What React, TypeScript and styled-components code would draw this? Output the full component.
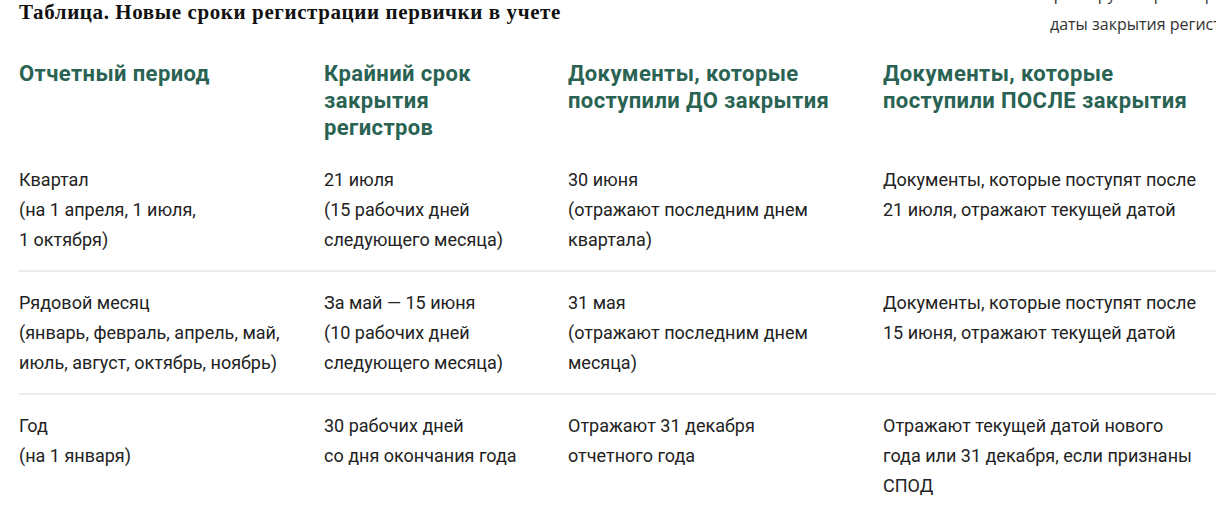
import React from "react";
import styled, { createGlobalStyle } from "styled-components";

const Global = createGlobalStyle`
  html, body { margin: 0; padding: 0; background: #fff; }
  body { overflow: hidden; width: 1216px; height: 513px; }
`;

const Page = styled.div`
  padding: 0 0 0 19px;
  width: 1216px;
  box-sizing: border-box;
  overflow: hidden;
`;

const TopBar = styled.div`
  display: flex;
  justify-content: space-between;
  align-items: flex-start;
  height: 36px;
`;

const Title = styled.h3`
  margin: 0;
  font-family: "Liberation Serif", "DejaVu Serif", serif;
  font-weight: 700;
  font-size: 21px;
  letter-spacing: 0.6px;
  line-height: 24px;
  color: #111;
  white-space: nowrap;
`;

const Aside = styled.div`
  width: 166px;
  overflow: hidden;
  white-space: nowrap;
  margin-top: -21px;
  font-family: "Open Sans", sans-serif;
  font-size: 16px;
  line-height: 30px;
  color: #333;
`;

const Table = styled.div`
  width: 1240px;
  margin-top: 24px;
`;

const Row = styled.div<{ $head?: boolean; $last?: boolean }>`
  display: grid;
  grid-template-columns: 305px 244px 315px 1fr;
  padding: ${(p) => (p.$head ? "0 0 8px" : "16px 0 15px")};
  border-bottom: ${(p) => (p.$head || p.$last ? "none" : "2px solid #ececec")};
`;

const HeadCell = styled.div`
  font-family: Roboto, "Noto Sans", sans-serif;
  font-weight: 700;
  font-size: 22px;
  letter-spacing: 0.4px;
  line-height: 27px;
  color: #2a6353;
  padding-right: 20px;
`;

const Cell = styled.div`
  font-family: Roboto, "Noto Sans", sans-serif;
  font-weight: 400;
  font-size: 18px;
  line-height: 30px;
  color: #222;
  padding-right: 12px;
`;

const Line = styled.div`
  white-space: nowrap;
`;

const head = [
  ["Отчетный период"],
  ["Крайний срок", "закрытия", "регистров"],
  ["Документы, которые", "поступили ДО закрытия"],
  ["Документы, которые", "поступили ПОСЛЕ закрытия"],
];

const rows: string[][][] = [
  [
    ["Квартал", "(на 1 апреля, 1 июля,", "1 октября)"],
    ["21 июля", "(15 рабочих дней", "следующего месяца)"],
    ["30 июня", "(отражают последним днем", "квартала)"],
    ["Документы, которые поступят после", "21 июля, отражают текущей датой"],
  ],
  [
    ["Рядовой месяц", "(январь, февраль, апрель, май,", "июль, август, октябрь, ноябрь)"],
    ["За май — 15 июня", "(10 рабочих дней", "следующего месяца)"],
    ["31 мая", "(отражают последним днем", "месяца)"],
    ["Документы, которые поступят после", "15 июня, отражают текущей датой"],
  ],
  [
    ["Год", "(на 1 января)"],
    ["30 рабочих дней", "со дня окончания года"],
    ["Отражают 31 декабря", "отчетного года"],
    ["Отражают текущей датой нового", "года или 31 декабря, если признаны", "СПОД"],
  ],
];

export default function App() {
  return (
    <>
      <Global />
      <Page>
        <TopBar>
          <Title>Таблица. Новые сроки регистрации первички в учете</Title>
          <Aside>
            <Line>фиксируют в регистрах</Line>
            <Line>даты закрытия регистров</Line>
          </Aside>
        </TopBar>
        <Table>
          <Row $head>
            {head.map((c, i) => (
              <HeadCell key={i}>
                {c.map((l, j) => (
                  <Line key={j}>{l}</Line>
                ))}
              </HeadCell>
            ))}
          </Row>
          {rows.map((r, ri) => (
            <Row key={ri} $last={ri === rows.length - 1}>
              {r.map((c, ci) => (
                <Cell key={ci}>
                  {c.map((l, j) => (
                    <Line key={j}>{l}</Line>
                  ))}
                </Cell>
              ))}
            </Row>
          ))}
        </Table>
      </Page>
    </>
  );
}
